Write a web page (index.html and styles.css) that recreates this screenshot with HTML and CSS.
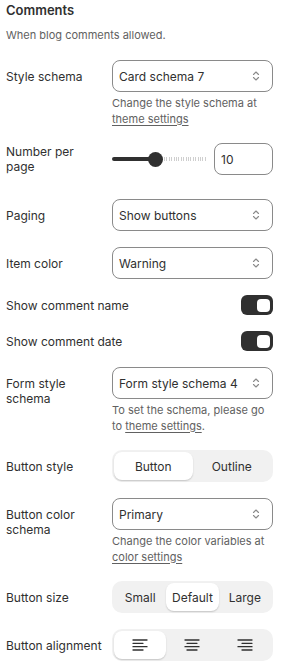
FILE: index.html
```html
<!DOCTYPE html>
<html>
<head>
<meta charset="utf-8">
<link rel="stylesheet" href="styles.css">
</head>
<body>
<div class="panel">
  <div class="title">Comments</div>
  <div class="subtitle">When blog comments allowed.</div>

  <div class="row">
    <div class="label top">Style schema</div>
    <div class="control">
      <div class="select"><span>Card schema 7</span><svg class="chev" viewBox="0 0 12 14"><path d="M3.5 5.5 6 3l2.5 2.5M3.5 8.5 6 11l2.5-2.5"/></svg></div>
      <div class="help">Change the style schema at <a>theme settings</a></div>
    </div>
  </div>

  <div class="row range-row">
    <div class="label">Number per page</div>
    <div class="control range">
      <div class="slider">
        <div class="fill"></div>
        <div class="thumb"></div>
        <div class="dots"></div>
      </div>
      <div class="input">10</div>
    </div>
  </div>

  <div class="row">
    <div class="label">Paging</div>
    <div class="control">
      <div class="select"><span>Show buttons</span><svg class="chev" viewBox="0 0 12 14"><path d="M3.5 5.5 6 3l2.5 2.5M3.5 8.5 6 11l2.5-2.5"/></svg></div>
    </div>
  </div>

  <div class="row">
    <div class="label">Item color</div>
    <div class="control">
      <div class="select"><span>Warning</span><svg class="chev" viewBox="0 0 12 14"><path d="M3.5 5.5 6 3l2.5 2.5M3.5 8.5 6 11l2.5-2.5"/></svg></div>
    </div>
  </div>

  <div class="toggle-row">
    <div class="label">Show comment name</div>
    <div class="toggle"><div class="knob"></div></div>
  </div>

  <div class="toggle-row">
    <div class="label">Show comment date</div>
    <div class="toggle"><div class="knob"></div></div>
  </div>

  <div class="row">
    <div class="label top">Form style schema</div>
    <div class="control">
      <div class="select"><span>Form style schema 4</span><svg class="chev" viewBox="0 0 12 14"><path d="M3.5 5.5 6 3l2.5 2.5M3.5 8.5 6 11l2.5-2.5"/></svg></div>
      <div class="help">To set the schema, please go to <a>theme settings</a>.</div>
    </div>
  </div>

  <div class="row">
    <div class="label">Button style</div>
    <div class="control">
      <div class="seg two">
        <div class="opt active">Button</div>
        <div class="opt">Outline</div>
      </div>
    </div>
  </div>

  <div class="row">
    <div class="label top">Button color schema</div>
    <div class="control">
      <div class="select"><span>Primary</span><svg class="chev" viewBox="0 0 12 14"><path d="M3.5 5.5 6 3l2.5 2.5M3.5 8.5 6 11l2.5-2.5"/></svg></div>
      <div class="help">Change the color variables at <a>color settings</a></div>
    </div>
  </div>

  <div class="row">
    <div class="label">Button size</div>
    <div class="control">
      <div class="seg three">
        <div class="opt">Small</div>
        <div class="opt active">Default</div>
        <div class="opt">Large</div>
      </div>
    </div>
  </div>

  <div class="row">
    <div class="label">Button alignment</div>
    <div class="control">
      <div class="seg three">
        <div class="opt active"><svg class="al" viewBox="0 0 16 12"><path d="M1 1h14M1 4.3h10M1 7.7h14M1 11h10"/></svg></div>
        <div class="opt"><svg class="al" viewBox="0 0 16 12"><path d="M1 1h14M3 4.3h10M1 7.7h14M3 11h10"/></svg></div>
        <div class="opt"><svg class="al" viewBox="0 0 16 12"><path d="M1 1h14M5 4.3h10M1 7.7h14M5 11h10"/></svg></div>
      </div>
    </div>
  </div>
</div>
</body>
</html>
```

FILE: styles.css
```css
* { box-sizing: border-box; }
body {
  margin: 0;
  background: #ffffff;
  font-family: Inter, "Noto Sans", sans-serif;
  color: #303030;
}
.panel {
  padding: 0 8px 0 6px;
  display: flex;
  flex-direction: column;
}
.title {
  font-size: 13px;
  font-weight: 600;
  line-height: 20px;
  color: #303030;
}
.subtitle {
  margin-top: 7px;
  font-size: 11px;
  line-height: 16px;
  color: #616161;
  margin-bottom: 17px;
}
.row {
  display: grid;
  grid-template-columns: 106px 1fr;
  margin-bottom: 16px;
}
.range-row { margin-bottom: 24px; }
.label {
  font-size: 12px;
  line-height: 15px;
  align-self: center;
  color: #303030;
  padding-right: 7.5px;
}
.label.top {
  align-self: start;
  padding-top: 8.5px;
}
.control { min-width: 0; }
.select {
  height: 32px;
  border: 1px solid #8a8a8a;
  border-radius: 8px;
  display: flex;
  align-items: center;
  justify-content: space-between;
  padding: 0 10px 0 6px;
  font-size: 12px;
  color: #303030;
}
.chev {
  width: 12px;
  height: 14px;
  fill: none;
  stroke: #8a8a8a;
  stroke-width: 1.1;
  stroke-linecap: round;
  stroke-linejoin: round;
}
.help {
  margin-top: 4px;
  font-size: 11px;
  line-height: 15.5px;
  color: #616161;
}
.help a {
  text-decoration: underline;
  color: #616161;
  text-underline-offset: 2px;
}
.range {
  display: flex;
  align-items: center;
  gap: 7px;
}
.slider {
  flex: 1;
  height: 32px;
  display: flex;
  align-items: center;
}
.fill {
  width: 43px;
  height: 4px;
  background: #303030;
  border-radius: 2px 0 0 2px;
}
.thumb {
  width: 15px;
  height: 15px;
  border-radius: 50%;
  background: #303030;
  margin-left: -7px;
}
.dots {
  width: 43px;
  margin-left: 1px;
  height: 4px;
  background: repeating-linear-gradient(90deg, #cfcfcf 0 1px, transparent 1px 2.4px);
}
.input {
  width: 60px;
  height: 32px;
  border: 1px solid #8a8a8a;
  border-radius: 8px;
  display: flex;
  align-items: center;
  padding-left: 6px;
  font-size: 12px;
}
.toggle-row {
  display: flex;
  justify-content: space-between;
  align-items: center;
  height: 20px;
  margin-bottom: 16px;
}
.toggle {
  width: 32px;
  height: 20px;
  border-radius: 6px;
  background: #303030;
  display: flex;
  align-items: center;
  justify-content: flex-end;
  padding-right: 3px;
}
.knob {
  width: 13px;
  height: 13px;
  border-radius: 4px;
  background: #ffffff;
}
.seg {
  height: 32px;
  border-radius: 10px;
  background: #f1f1f1;
  padding: 2px;
  display: grid;
}
.seg.two { grid-template-columns: 1fr 1fr; }
.seg.three { grid-template-columns: 1fr 1fr 1fr; }
.opt {
  display: flex;
  align-items: center;
  justify-content: center;
  font-size: 12px;
  color: #303030;
  border-radius: 8px;
}
.opt.active {
  background: #ffffff;
  box-shadow: 0 1px 1.5px rgba(0, 0, 0, 0.18);
}
.al {
  width: 16px;
  height: 12px;
  fill: none;
  stroke: #303030;
  stroke-width: 1.3;
  stroke-linecap: round;
}
```
